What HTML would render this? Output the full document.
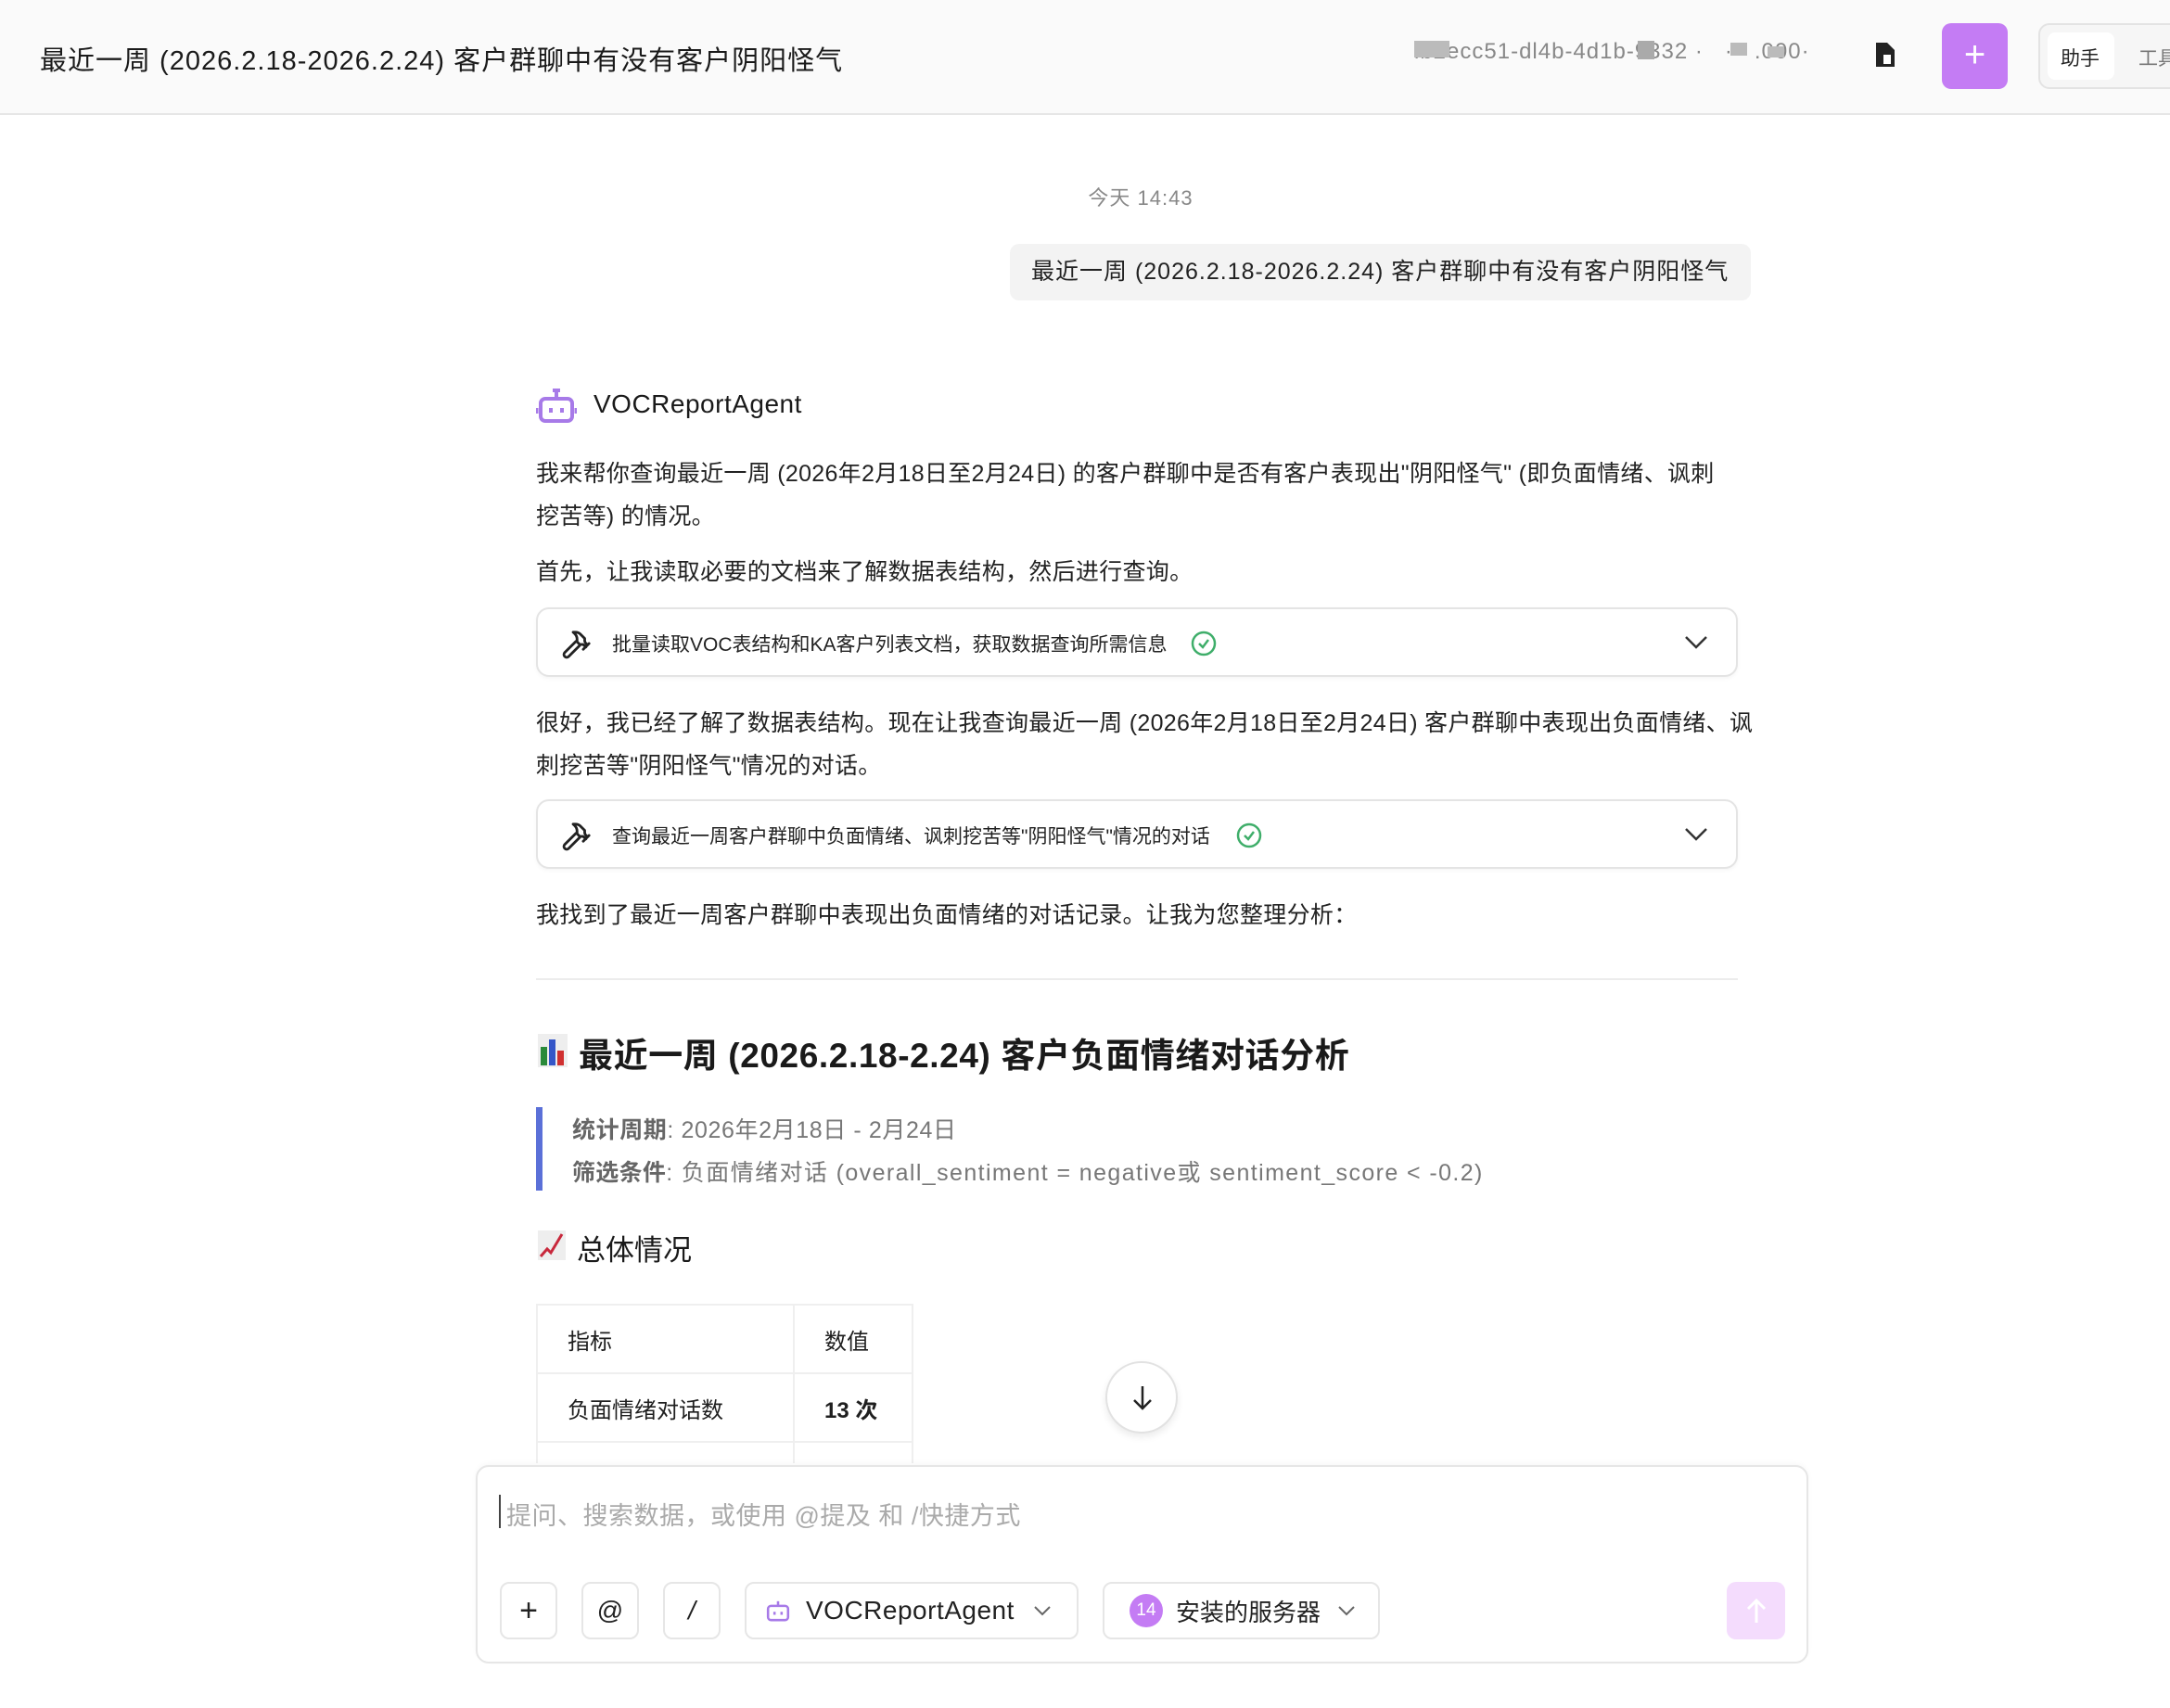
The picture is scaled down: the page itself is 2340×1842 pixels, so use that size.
<!DOCTYPE html>
<html><head><meta charset="utf-8"><style>
*{box-sizing:border-box;margin:0;padding:0}
body{width:2340px;height:1842px;overflow:hidden;background:#fff;font-family:"Liberation Sans","Noto Sans CJK SC",sans-serif;color:#1f1f1f;position:relative}
.abs{position:absolute;white-space:nowrap}
.hdr{left:0;top:0;width:2340px;height:124px;background:#fafafa;border-bottom:2px solid #e6e6e6}
.p{position:absolute;left:578px;font-size:25px;color:#222;white-space:nowrap;letter-spacing:0.3px}
.tool{position:absolute;left:578px;width:1296px;height:75px;border:2px solid #e4e4e4;border-radius:14px;background:#fff;box-shadow:0 2px 4px rgba(0,0,0,.04)}
.tool .t{position:absolute;left:80px;top:22px;font-size:21px;color:#222;white-space:nowrap}
.btn{position:absolute;top:1706px;height:62px;border:2px solid #e6e6e6;border-radius:10px;background:#fff;display:flex;align-items:center;justify-content:center;font-size:28px;color:#222;white-space:nowrap}
td{border:2px solid #efefef;font-size:24px;padding:0 32px;height:74px}
</style></head><body>
<div class="abs hdr"></div>
<div class="abs" style="left:43px;top:42px;font-size:29px;color:#1a1a1a;letter-spacing:1px">最近一周 (2026.2.18-2026.2.24) 客户群聊中有没有客户阴阳怪气</div>
<div class="abs" style="left:1525px;top:42px;font-size:24px;color:#888;letter-spacing:1px">ib2ecc51-dl4b-4d1b-9332 · &nbsp; · &nbsp; .000·</div>
<div class="abs" style="left:1525px;top:44px;width:38px;height:18px;background:#bbb"></div>
<div class="abs" style="left:1766px;top:44px;width:18px;height:20px;background:#aaa"></div>
<div class="abs" style="left:1866px;top:46px;width:18px;height:14px;background:#bbb"></div>
<div class="abs" style="left:1906px;top:50px;width:18px;height:12px;background:#bbb"></div>
<svg class="abs" style="left:2020px;top:44px" width="26" height="30" viewBox="0 0 26 30"><path d="M3 2h12l8 8v18H3z" fill="#222"/><path d="M10 14h10v12H10z" fill="#fff" stroke="#222" stroke-width="2"/></svg>
<div class="abs" style="left:2094px;top:25px;width:71px;height:71px;border-radius:10px;background:#c47cf4;color:#fff;font-size:40px;text-align:center;line-height:68px;font-weight:300">+</div>
<div class="abs" style="left:2198px;top:25px;width:200px;height:71px;border:2px solid #e3e3e3;border-radius:12px;background:#f6f6f6"></div>
<div class="abs" style="left:2208px;top:35px;width:72px;height:51px;border-radius:8px;background:#fff"></div>
<div class="abs" style="left:2222px;top:47px;font-size:21px;color:#222">助手</div>
<div class="abs" style="left:2306px;top:47px;font-size:21px;color:#777">工具</div>

<div class="abs" style="left:0;width:2460px;top:196px;text-align:center;font-size:22px;color:#888;letter-spacing:1px">今天 14:43</div>
<div class="abs" style="left:1089px;top:263px;width:799px;height:61px;background:#f3f3f3;border-radius:10px;font-size:25px;line-height:61px;padding-left:23px;color:#222;letter-spacing:1px">最近一周 (2026.2.18-2026.2.24) 客户群聊中有没有客户阴阳怪气</div>

<svg class="abs" style="left:578px;top:418px" width="44" height="40" viewBox="0 0 44 40"><rect x="5" y="12" width="34" height="24" rx="5" fill="none" stroke="#a77ae8" stroke-width="4"/><path d="M22 12V4M18 3h8" stroke="#a77ae8" stroke-width="4"/><path d="M16 22v5M28 22v5" stroke="#a77ae8" stroke-width="4"/><path d="M1 22v6M43 22v6" stroke="#a77ae8" stroke-width="3"/></svg>
<div class="abs" style="left:640px;top:420px;font-size:28px;color:#1a1a1a;letter-spacing:0.5px">VOCReportAgent</div>
<div class="p" style="top:491px">我来帮你查询最近一周 (2026年2月18日至2月24日) 的客户群聊中是否有客户表现出"阴阳怪气" (即负面情绪、讽刺</div>
<div class="p" style="top:537px">挖苦等) 的情况。</div>
<div class="p" style="top:597px">首先，让我读取必要的文档来了解数据表结构，然后进行查询。</div>
<div class="tool" style="top:655px"><svg class="abs" style="left:24px;top:22px" width="34" height="34" viewBox="0 0 24 24" fill="none" stroke="#222" stroke-width="2" stroke-linecap="round" stroke-linejoin="round"><path d="M15 12l-8.5 8.5a2.1 2.1 0 0 1-3-3L12 9"/><path d="M17.6 15L22 10.6M20.9 11.7l-1.3-1.3c-.6-.6-.9-1.3-.9-2.1V6.7L15.4 3.4A5.6 5.6 0 0 0 11.5 2H9.9l.9.8a6.2 6.2 0 0 1 2.1 4.7v1.8l2 2h2.5l2.3 1.9"/></svg><div class="t">批量读取VOC表结构和KA客户列表文档，获取数据查询所需信息</div><svg class="abs" style="left:703px;top:22px" width="30" height="30" viewBox="0 0 30 30"><circle cx="15" cy="15" r="12" fill="none" stroke="#3fae6a" stroke-width="2.5"/><path d="M10 15l4 4 6-8" fill="none" stroke="#3fae6a" stroke-width="2.5"/></svg><svg class="abs" style="left:1236px;top:28px" width="26" height="16" viewBox="0 0 26 16"><path d="M2 2l11 11L24 2" fill="none" stroke="#333" stroke-width="2.5"/></svg></div>
<div class="p" style="top:760px">很好，我已经了解了数据表结构。现在让我查询最近一周 (2026年2月18日至2月24日) 客户群聊中表现出负面情绪、讽</div>
<div class="p" style="top:806px">刺挖苦等"阴阳怪气"情况的对话。</div>
<div class="tool" style="top:862px"><svg class="abs" style="left:24px;top:22px" width="34" height="34" viewBox="0 0 24 24" fill="none" stroke="#222" stroke-width="2" stroke-linecap="round" stroke-linejoin="round"><path d="M15 12l-8.5 8.5a2.1 2.1 0 0 1-3-3L12 9"/><path d="M17.6 15L22 10.6M20.9 11.7l-1.3-1.3c-.6-.6-.9-1.3-.9-2.1V6.7L15.4 3.4A5.6 5.6 0 0 0 11.5 2H9.9l.9.8a6.2 6.2 0 0 1 2.1 4.7v1.8l2 2h2.5l2.3 1.9"/></svg><div class="t">查询最近一周客户群聊中负面情绪、讽刺挖苦等"阴阳怪气"情况的对话</div><svg class="abs" style="left:752px;top:22px" width="30" height="30" viewBox="0 0 30 30"><circle cx="15" cy="15" r="12" fill="none" stroke="#3fae6a" stroke-width="2.5"/><path d="M10 15l4 4 6-8" fill="none" stroke="#3fae6a" stroke-width="2.5"/></svg><svg class="abs" style="left:1236px;top:28px" width="26" height="16" viewBox="0 0 26 16"><path d="M2 2l11 11L24 2" fill="none" stroke="#333" stroke-width="2.5"/></svg></div>
<div class="p" style="top:967px">我找到了最近一周客户群聊中表现出负面情绪的对话记录。让我为您整理分析：</div>
<div class="abs" style="left:578px;top:1055px;width:1296px;height:2px;background:#ececec"></div>
<svg class="abs" style="left:580px;top:1115px" width="32" height="36" viewBox="0 0 32 36"><rect x="0" y="0" width="32" height="36" fill="#eee"/><rect x="3" y="14" width="7" height="20" fill="#2a8a3a"/><rect x="12" y="6" width="7" height="28" fill="#3556c8"/><rect x="21" y="18" width="7" height="16" fill="#d03030"/></svg>
<div class="abs" style="left:624px;top:1108px;font-size:37px;font-weight:bold;color:#1a1a1a;letter-spacing:0.6px">最近一周 (2026.2.18-2.24) 客户负面情绪对话分析</div>
<div class="abs" style="left:578px;top:1194px;width:7px;height:90px;background:#5b70d8"></div>
<div class="abs" style="left:617px;top:1199px;font-size:25px;color:#777;letter-spacing:0.6px"><b style="color:#666">统计周期</b>: 2026年2月18日 - 2月24日</div>
<div class="abs" style="left:617px;top:1245px;font-size:25px;color:#777;letter-spacing:1.4px"><b style="color:#666;letter-spacing:0.3px">筛选条件</b>: 负面情绪对话 (overall_sentiment = negative或 sentiment_score &lt; -0.2)</div>
<svg class="abs" style="left:580px;top:1327px" width="30" height="32" viewBox="0 0 30 32"><rect width="30" height="32" fill="#eee"/><path d="M3 28l7-8 4 4 12-20" fill="none" stroke="#c8283c" stroke-width="3"/></svg>
<div class="abs" style="left:622px;top:1323px;font-size:31px;color:#1a1a1a">总体情况</div>
<table class="abs" style="left:578px;top:1406px;border-collapse:collapse;width:407px">
<tr><td style="width:277px">指标</td><td>数值</td></tr>
<tr><td>负面情绪对话数</td><td style="font-weight:bold">13 次</td></tr>
<tr><td>&nbsp;</td><td>&nbsp;</td></tr>
</table>
<div class="abs" style="left:1192px;top:1468px;width:78px;height:78px;border-radius:50%;background:#fff;border:2px solid #e2e2e2;box-shadow:0 4px 8px rgba(0,0,0,.08)"><svg class="abs" style="left:25px;top:22px" width="26" height="32" viewBox="0 0 26 32"><path d="M13 3v24M4 18l9 9 9-9" fill="none" stroke="#222" stroke-width="2.5"/></svg></div>
<div class="abs" style="left:0;top:1578px;width:2340px;height:264px;background:#fff"></div>
<div class="abs" style="left:513px;top:1580px;width:1437px;height:214px;border:2px solid #e6e6e6;border-radius:14px;background:#fff;box-shadow:0 -2px 6px rgba(0,0,0,.03)"></div>
<div class="abs" style="left:538px;top:1612px;width:2px;height:36px;background:#444"></div>
<div class="abs" style="left:546px;top:1613px;font-size:27px;color:#aaa;letter-spacing:0.5px">提问、搜索数据，或使用 @提及 和 /快捷方式</div>
<div class="btn" style="left:539px;width:62px;font-size:34px">+</div>
<div class="btn" style="left:627px;width:62px">@</div>
<div class="btn" style="left:715px;width:62px;font-style:italic">/</div>
<div class="btn" style="left:803px;width:360px;justify-content:flex-start;padding-left:20px"><svg width="28" height="26" viewBox="0 0 44 40"><rect x="5" y="12" width="34" height="24" rx="5" fill="none" stroke="#a77ae8" stroke-width="4"/><path d="M22 12V4" stroke="#a77ae8" stroke-width="4"/><path d="M16 22v5M28 22v5" stroke="#a77ae8" stroke-width="4"/></svg><span style="margin-left:16px;font-size:28px;letter-spacing:0.5px">VOCReportAgent</span><svg style="margin-left:20px" width="20" height="12" viewBox="0 0 20 12"><path d="M2 2l8 8 8-8" fill="none" stroke="#666" stroke-width="2"/></svg></div>
<div class="btn" style="left:1189px;width:299px;justify-content:flex-start;padding-left:27px"><span style="width:36px;height:36px;border-radius:50%;background:#c47cf4;color:#fff;font-size:19px;display:flex;align-items:center;justify-content:center">14</span><span style="margin-left:14px;font-size:26px">安装的服务器</span><svg style="margin-left:18px" width="20" height="12" viewBox="0 0 20 12"><path d="M2 2l8 8 8-8" fill="none" stroke="#666" stroke-width="2"/></svg></div>
<div class="abs" style="left:1862px;top:1706px;width:63px;height:62px;border-radius:10px;background:#f4dcfd"><svg class="abs" style="left:20px;top:16px" width="24" height="30" viewBox="0 0 24 30"><path d="M12 28V4M3 13l9-9 9 9" fill="none" stroke="#fff" stroke-width="3"/></svg></div>
</body></html>
